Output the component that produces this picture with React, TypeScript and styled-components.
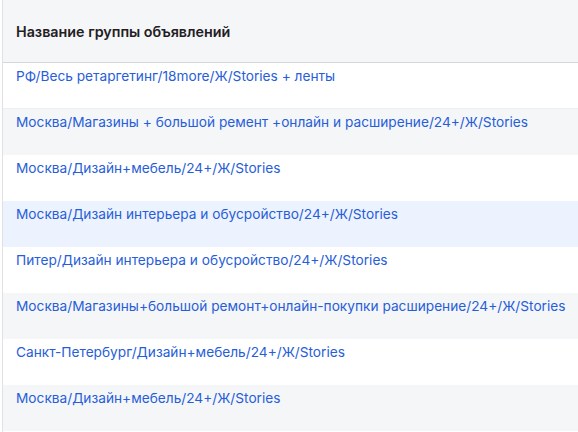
import React from "react";
import styled, { createGlobalStyle } from "styled-components";

const Global = createGlobalStyle`
  html, body { margin: 0; padding: 0; background: #ffffff; }
  body { font-family: Inter, "Noto Sans", "Liberation Sans", sans-serif; }
`;

const Table = styled.div`
  margin-left: 2px;
  border-left: 1px solid #dfe1e5;
  width: 576px;
  height: 432px;
  overflow: hidden;
  display: flex;
  flex-direction: column;
`;

const Header = styled.div`
  height: 62px;
  flex: none;
  display: flex;
  align-items: center;
  padding-left: 13px;
  background: #f5f6f8;
  border-bottom: 1px solid #d3d6db;
  font-size: 14.3px;
  font-weight: 600;
  color: #1f2023;
  box-sizing: content-box;
`;

const Row = styled.div<{ $tone: "white" | "gray" | "blue"; $divider?: boolean }>`
  height: 46px;
  flex: none;
  box-sizing: border-box;
  padding: 5px 0 0 13px;
  background: ${(p) =>
    p.$tone === "gray" ? "#f5f6f8" : p.$tone === "blue" ? "#edf3fe" : "#ffffff"};
  border-bottom: ${(p) => (p.$divider ? "1px solid #eceef1" : "none")};
`;

const Link = styled.a`
  display: block;
  font-size: 13.7px;
  line-height: 17px;
  color: #275ed8;
  text-decoration: none;
  white-space: nowrap;
`;

const rows: { text: string; tone: "white" | "gray" | "blue"; divider?: boolean }[] = [
  { text: "РФ/Весь ретаргетинг/18more/Ж/Stories + ленты", tone: "white", divider: true },
  { text: "Москва/Магазины + большой ремент +онлайн и расширение/24+/Ж/Stories", tone: "gray" },
  { text: "Москва/Дизайн+мебель/24+/Ж/Stories", tone: "white" },
  { text: "Москва/Дизайн интерьера и обусройство/24+/Ж/Stories", tone: "blue" },
  { text: "Питер/Дизайн интерьера и обусройство/24+/Ж/Stories", tone: "white" },
  { text: "Москва/Магазины+большой ремонт+онлайн-покупки расширение/24+/Ж/Stories", tone: "gray" },
  { text: "Санкт-Петербург/Дизайн+мебель/24+/Ж/Stories", tone: "white" },
  { text: "Москва/Дизайн+мебель/24+/Ж/Stories", tone: "gray" },
];

export default function App() {
  return (
    <>
      <Global />
      <Table>
        <Header>Название группы объявлений</Header>
        {rows.map((r, i) => (
          <Row key={i} $tone={r.tone} $divider={r.divider}>
            <Link href="#">{r.text}</Link>
          </Row>
        ))}
      </Table>
    </>
  );
}
